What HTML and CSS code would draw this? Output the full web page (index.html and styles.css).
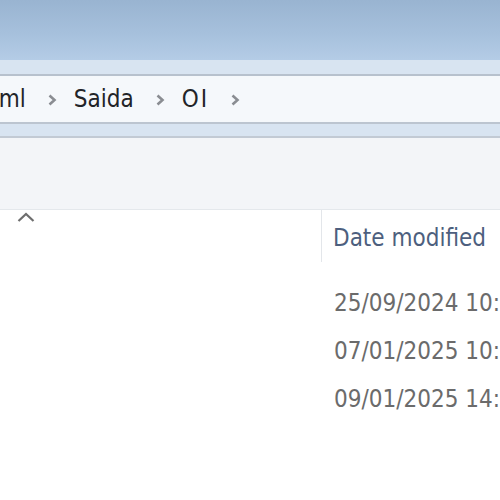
FILE: index.html
```html
<!DOCTYPE html>
<html>
<head>
<meta charset="utf-8">
<link rel="stylesheet" href="styles.css">
</head>
<body>
<div class="window">
  <div class="titlebar"></div>
  <div class="band band-top"></div>
  <div class="address">
    <div class="crumbs">
      <span class="crumb crumb-cut">xml</span>
      <svg class="chev" width="9" height="12" viewBox="0 0 9 12"><path d="M1.5 1.5 L6.5 6 L1.5 10.5" fill="none" stroke="#8a8d92" stroke-width="2.6"/></svg>
      <span class="crumb">Saida</span>
      <svg class="chev" width="9" height="12" viewBox="0 0 9 12"><path d="M1.5 1.5 L6.5 6 L1.5 10.5" fill="none" stroke="#8a8d92" stroke-width="2.6"/></svg>
      <span class="crumb crumb-oi">OI</span>
      <svg class="chev" width="9" height="12" viewBox="0 0 9 12"><path d="M1.5 1.5 L6.5 6 L1.5 10.5" fill="none" stroke="#8a8d92" stroke-width="2.6"/></svg>
    </div>
  </div>
  <div class="band band-bottom"></div>
  <div class="toolbar"></div>
  <div class="content">
    <div class="colheader">
      <div class="col col-name">
        <svg class="sort" width="18" height="10" viewBox="0 0 18 10"><path d="M1.5 9 L9 2 L16.5 9" fill="none" stroke="#6e6e6e" stroke-width="2.2"/></svg>
      </div>
      <div class="col col-date">Date modified</div>
    </div>
    <div class="rows">
      <div class="row"><span class="cell-date">25/09/2024 10:</span></div>
      <div class="row"><span class="cell-date">07/01/2025 10:</span></div>
      <div class="row"><span class="cell-date">09/01/2025 14:</span></div>
    </div>
  </div>
</div>
</body>
</html>
```
FILE: styles.css
```css
* { box-sizing: border-box; }
html, body { margin: 0; padding: 0; background: #ffffff; }
body { width: 500px; height: 500px; overflow: hidden; font-family: "DejaVu Sans Condensed", "DejaVu Sans", sans-serif; }
.window { width: 500px; height: 500px; display: flex; flex-direction: column; }
.titlebar { height: 60px; background: linear-gradient(to bottom, #99b4d1 0%, #a6c0dc 55%, #b4cce6 100%); }
.band { background: #d8e4f1; }
.band-top { height: 16px; border-bottom: 2px solid #b7c1cd; }
.address { height: 46px; background: #f5f8fb; display: flex; align-items: center; }
.crumbs { display: flex; align-items: center; margin-left: -14px; }
.crumb { font-size: 24px; color: #222428; }
.crumb-oi { letter-spacing: 2px; }
.chev { display: block; margin: 1px 17px 0 22px; }
.band-bottom { height: 16px; border-top: 2px solid #bcc5d0; border-bottom: 2px solid #c2cad4; }
.toolbar { height: 72px; background: #f3f5f8; border-bottom: 1px solid #e4e8ec; }
.content { flex: 1; background: #ffffff; }
.colheader { display: flex; height: 52px; }
.col-name { width: 322px; border-right: 1px solid #e3e6ea; position: relative; }
.sort { position: absolute; left: 17px; top: 2px; }
.col-date { padding: 14px 0 0 11px; font-size: 24px; color: #4d5f7e; white-space: nowrap; }
.rows { display: flex; flex-direction: column; padding-top: 27px; }
.row { height: 48px; padding-left: 334px; white-space: nowrap; }
.cell-date { font-size: 24px; color: #6b6b6b; }
```
